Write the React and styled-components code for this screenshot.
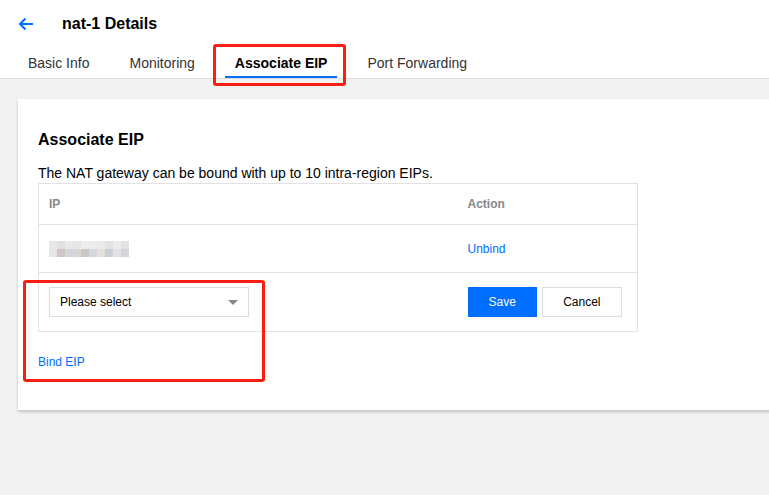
import React from 'react'
import styled, { createGlobalStyle } from 'styled-components'

const GlobalStyle = createGlobalStyle`
  html, body {
    margin: 0;
    padding: 0;
    background: #f2f2f2;
    font-family: Arial, "Liberation Sans", sans-serif;
    color: #000;
  }
`

const blue = '#006eff'
const line = '#e2e2e2'

const maskTop = ['#e8e8e8', '#e4e0df', '#e9e9ec', '#e6e6e8', '#eeeeee', '#ededed', '#ebe9e4', '#e0e2e3', '#ebebeb', '#e2e3e6']
const maskBottom = ['#e6e6e6', '#cdc8c6', '#d4d5da', '#d9d6d4', '#cbc7c5', '#d6d7dc', '#e6e1db', '#cbced2', '#e2e2e2', '#d5d6da']

const tabs = ['Basic Info', 'Monitoring', 'Associate EIP', 'Port Forwarding']

const BackArrow = () => (
  <svg width="16" height="14" viewBox="0 0 16 14" fill="none">
    <path d="M15 7H2M7.5 1.5L2 7l5.5 5.5" stroke={blue} strokeWidth="2" />
  </svg>
)

// pixelated placeholder standing in for a hidden IP address
const MaskedIp = () => (
  <svg width="80" height="16" viewBox="0 0 80 16">
    {maskTop.map((c, i) => <rect key={'t' + i} x={i * 8} y="0" width="8" height="8" fill={c} />)}
    {maskBottom.map((c, i) => <rect key={'b' + i} x={i * 8} y="8" width="8" height="8" fill={c} />)}
  </svg>
)

const App = () => (
  <Page>
    <GlobalStyle />
    <Header>
      <TitleBar>
        <BackButton><BackArrow /></BackButton>
        <Title>nat-1 Details</Title>
      </TitleBar>
      <TabList>
        {tabs.map((t) => (
          <Tab key={t} $active={t === 'Associate EIP'}>{t}</Tab>
        ))}
      </TabList>
    </Header>

    <Card>
      <CardTitle>Associate EIP</CardTitle>
      <Hint>The NAT gateway can be bound with up to 10 intra-region EIPs.</Hint>
      <Table>
        <thead>
          <tr>
            <Th>IP</Th>
            <Th $w={180}>Action</Th>
          </tr>
        </thead>
        <tbody>
          <Row>
            <Td $h={48}><MaskedIp /></Td>
            <Td $h={48}><LinkText>Unbind</LinkText></Td>
          </Row>
          <Row>
            <Td $h={59}>
              <Select>
                <span>Please select</span>
                <Caret />
              </Select>
            </Td>
            <Td $h={59}>
              <Actions>
                <Button $primary>Save</Button>
                <Button>Cancel</Button>
              </Actions>
            </Td>
          </Row>
        </tbody>
      </Table>
      <BindLink>Bind EIP</BindLink>
    </Card>

    <Highlight style={{ left: 213, top: 44, width: 133, height: 42 }} />
    <Highlight style={{ left: 23, top: 280, width: 242, height: 102 }} />
  </Page>
)

const Page = styled.div`
  position: relative;
  width: 769px;
  height: 495px;
  overflow: hidden;
  background: #f2f2f2;
`

const Header = styled.header`
  background: #fff;
  border-bottom: 1px solid #dcdcdc;
  height: 79px;
  box-sizing: border-box;
`

const TitleBar = styled.div`
  display: flex;
  align-items: center;
  height: 48px;
  padding-left: 18px;
`

const BackButton = styled.span`
  display: flex;
  width: 44px;
  margin-top: -1px;
`

const Title = styled.h1`
  margin: 0;
  font-size: 16px;
  font-weight: bold;
`

const TabList = styled.nav`
  display: flex;
  gap: 20px;
  padding-left: 18px;
  height: 30px;
`

const Tab = styled.div`
  padding: 0 10px;
  font-size: 14px;
  line-height: 30px;
  color: ${(p) => (p.$active ? '#000' : '#333')};
  font-weight: ${(p) => (p.$active ? 'bold' : 'normal')};
  border-bottom: 2px solid ${(p) => (p.$active ? blue : 'transparent')};
  height: 28px;
  line-height: 30px;
`

const Card = styled.section`
  margin: 20px 0 0 18px;
  width: 820px;
  background: #fff;
  box-shadow: 0 2px 3px rgba(0, 0, 0, 0.2);
  padding: 31px 20px 40px;
  box-sizing: border-box;
`

const CardTitle = styled.h2`
  margin: 0;
  font-size: 16px;
  font-weight: bold;
  line-height: 20px;
`

const Hint = styled.p`
  margin: 13px 0 0;
  font-size: 14px;
  line-height: 20px;
`

const Table = styled.table`
  width: 600px;
  border-collapse: collapse;
  border: 1px solid ${line};
  table-layout: fixed;
`

const Th = styled.th`
  text-align: left;
  font-size: 12px;
  font-weight: bold;
  color: #888;
  height: 41px;
  padding: 0 10px;
  box-sizing: border-box;
  width: ${(p) => (p.$w ? p.$w + 'px' : 'auto')};
`

const Row = styled.tr`
  border-top: 1px solid ${line};
`

const Td = styled.td`
  height: ${(p) => p.$h}px;
  padding: 0 10px;
  box-sizing: border-box;
  vertical-align: middle;
  font-size: 12px;

  svg {
    display: block;
  }
`

const LinkText = styled.span`
  color: ${blue};
  font-size: 12px;
`

const Select = styled.div`
  display: flex;
  align-items: center;
  justify-content: space-between;
  width: 200px;
  height: 30px;
  box-sizing: border-box;
  border: 1px solid #ddd;
  padding: 0 10px;
  font-size: 12px;
  color: #000;
`

const Caret = styled.span`
  width: 0;
  height: 0;
  border-left: 5px solid transparent;
  border-right: 5px solid transparent;
  border-top: 5px solid #888;
`

const Actions = styled.div`
  display: flex;
  gap: 5px;
`

const Button = styled.button`
  height: 30px;
  min-width: ${(p) => (p.$primary ? 69 : 80)}px;
  padding: 0 20px;
  font-family: inherit;
  font-size: 12px;
  border: 1px solid ${(p) => (p.$primary ? blue : '#ddd')};
  background: ${(p) => (p.$primary ? blue : '#fff')};
  color: ${(p) => (p.$primary ? '#fff' : '#000')};
`

const BindLink = styled.div`
  margin-top: 22px;
  font-size: 12px;
  line-height: 16px;
  color: ${blue};
`

const Highlight = styled.div`
  position: absolute;
  box-sizing: border-box;
  border: 3px solid #fa1e12;
  border-radius: 3px;
  pointer-events: none;
`

export default App
